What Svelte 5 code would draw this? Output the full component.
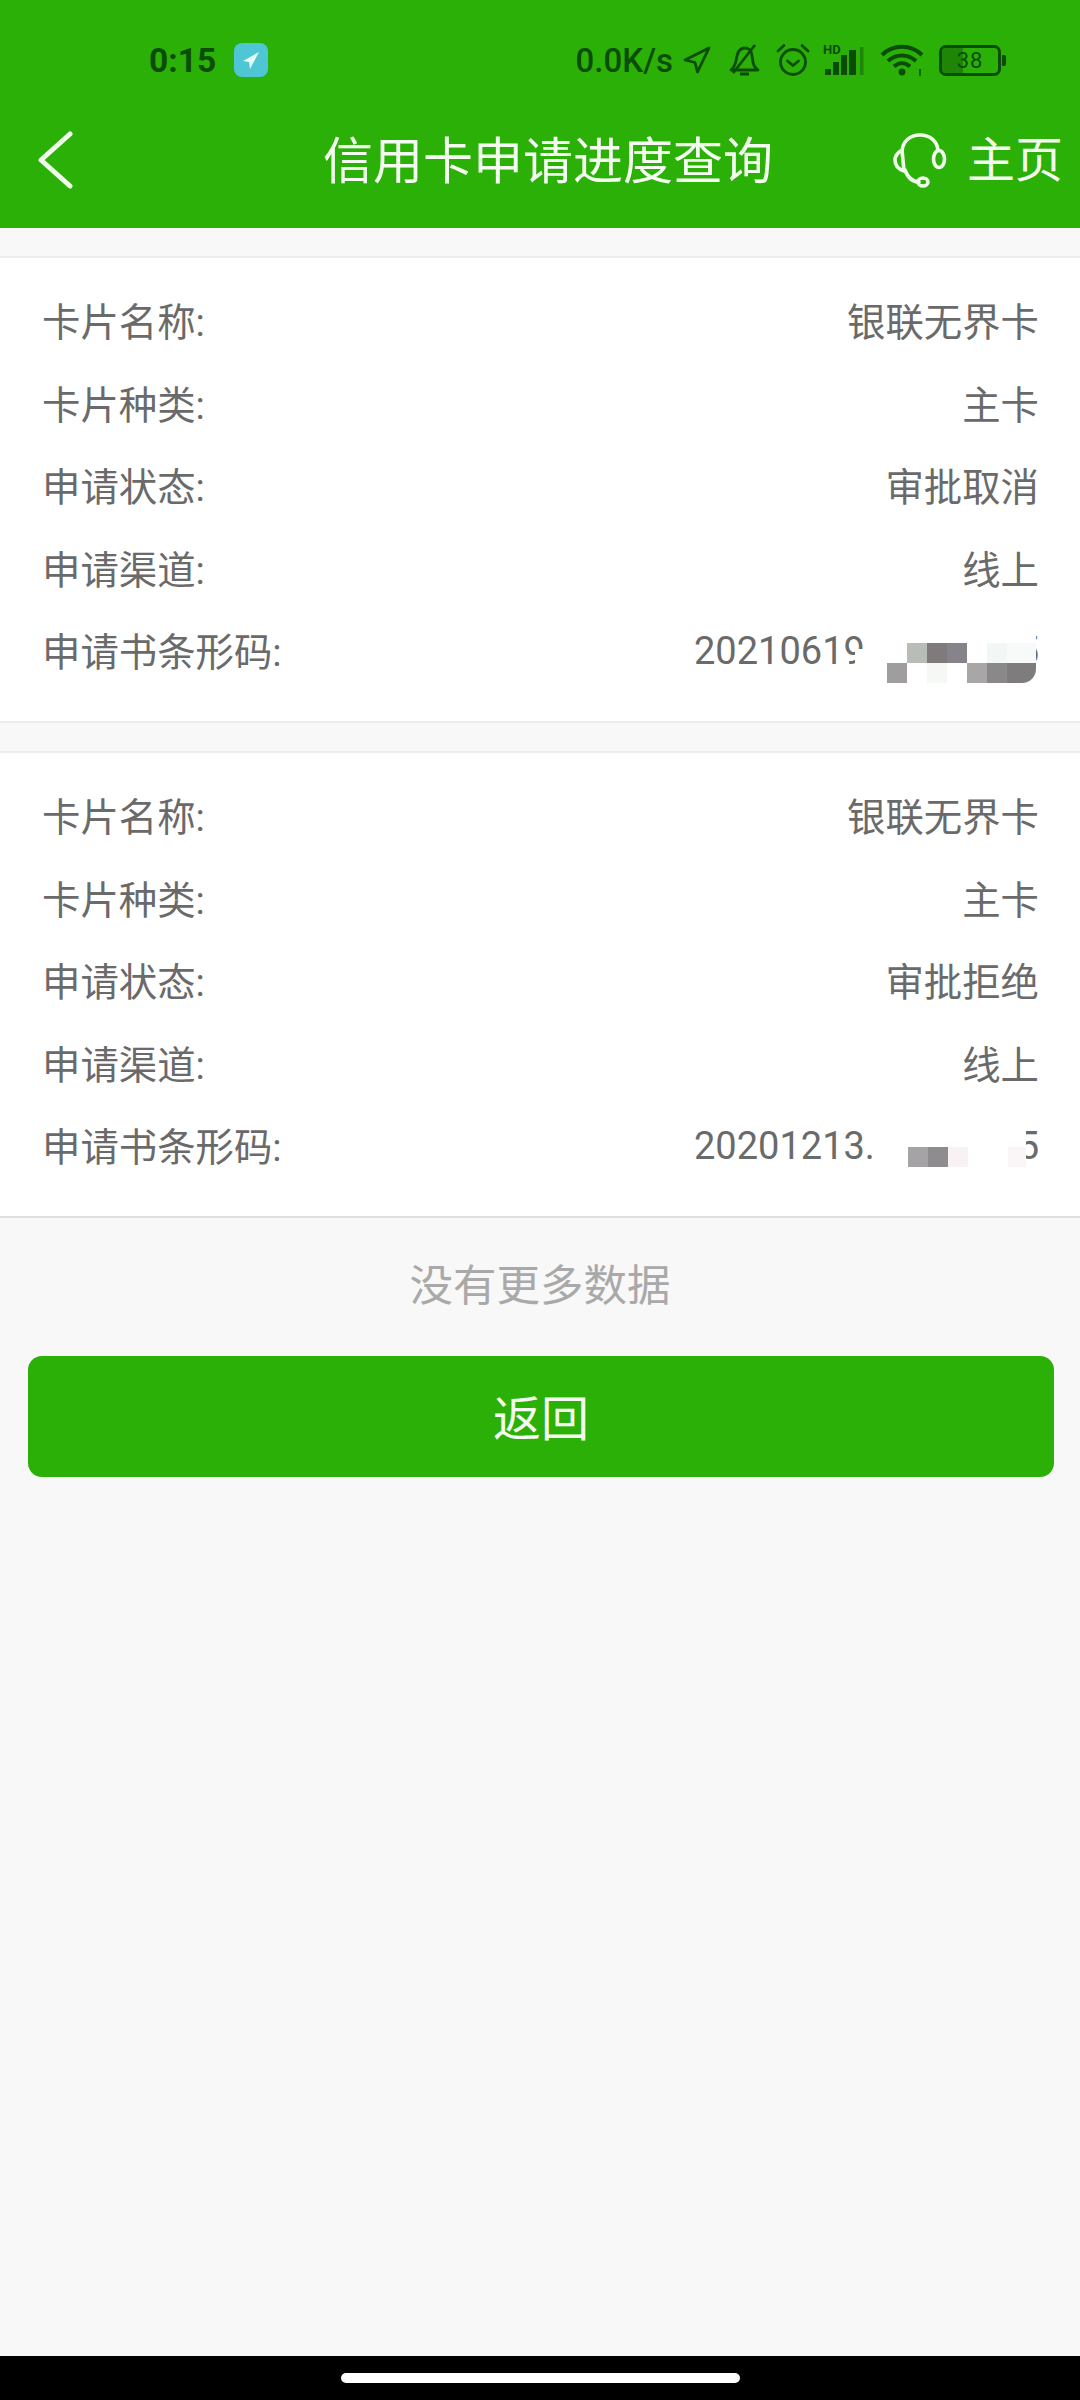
<script>
const cards = [
  {
    status: '审批取消',
    code: '20210619',
    blocks: ['', '', '#b9bdb8', '#7f7b7d', '#87838a', '', '#f2f6f4', '#f8fafa', '', '#a09d9f', '', '#f5f8f5', '', '#a8a6a7', '#8a8889', '#7f7c7e'],
    cls: 'first'
  },
  {
    status: '审批拒绝',
    code: '20201213.',
    blocks: ['', '', '#a5a3a5', '#8f8c90', '#f8f2f4', '', '', '#faf6f8'],
    cls: 'second'
  }
]
</script>

<div class="page">
  <header>
    <div class="status">
      <div class="left">
        <span class="time">0:15</span>
        <span class="app-badge">
          <svg viewBox="0 0 32 32" width="32" height="32"><path d="M24 8 L8 17 L14 18 L15 25 Z" fill="#e8fbfb"/></svg>
        </span>
      </div>
      <div class="right">
        <span class="speed">0.0K/s</span>
        <svg class="ic" viewBox="0 0 30 30" width="30" height="30"><path d="M27 3 L3 15 L13 17.500 L15.500 27 Z" fill="none" stroke="#0b4d06" stroke-width="2.800" stroke-linejoin="round"/></svg>
        <svg class="ic bell" viewBox="0 0 32 34" width="32" height="34"><path d="M3 27 C8 23 8 17 9 13 C10 8 13 5 17 5 C21 5 24 8 24 13 L25 19 C25.500 22 27 25 30 27 Z M12 31 H21 M27 2 L5 30" fill="none" stroke="#0b4d06" stroke-width="2.800" stroke-linejoin="round"/></svg>
        <svg class="ic alarm" viewBox="0 0 36 36" width="36" height="36"><circle cx="18" cy="20" r="12.500" fill="none" stroke="#0b4d06" stroke-width="2.800"/><path d="M12.500 19 L18 23.500 L23.500 19 M3 9 L9 3.500 M33 9 L27 3.500" fill="none" stroke="#0b4d06" stroke-width="2.800" stroke-linecap="round"/></svg>
        <span class="signal">
          <span class="hd">HD</span>
          <svg viewBox="0 0 41 30" width="41" height="30"><path d="M2 30 V24 H8 V30 Z M10 30 V17 H16 V30 Z M18 30 V10 H24 V30 Z M26 30 V5 H33 V30 Z" fill="#0b4d06"/><rect x="37" y="2" width="3.500" height="28" fill="#1f8507"/></svg>
        </span>
        <svg class="ic wifi" viewBox="0 0 44 32" width="44" height="32"><path d="M2 11 C13 0 31 0 42 11 M8 17 C16 9.500 28 9.500 36 17 M14 22.500 C19 18 25 18 30 22.500" fill="none" stroke="#0b4d06" stroke-width="4"/><circle cx="22" cy="28" r="3.400" fill="#0b4d06"/><path d="M40 25 V33" stroke="#0b4d06" stroke-width="1.500"/></svg>
        <span class="battery"><span class="level"></span><span class="pct">38</span></span>
        <span class="nub"></span>
      </div>
    </div>
    <nav>
      <svg class="back" viewBox="0 0 36 60" width="36" height="60"><path d="M33 4 L4 30 L33 56" fill="none" stroke="#f0fbec" stroke-width="5" stroke-linecap="round" stroke-linejoin="round"/></svg>
      <h1>信用卡申请进度查询</h1>
      <div class="home">
        <svg viewBox="0 0 56 56" width="56" height="56"><path d="M10 19 C11 9 18 3 28 3 C38 3 45 9 46 18 M13 38 C16 46 21 50 27 50" fill="none" stroke="#f0fbec" stroke-width="3.600" stroke-linecap="round"/><path d="M10 18 C5 21 3 24 3 28 C3 33 6 37 12 39 Z" fill="none" stroke="#f0fbec" stroke-width="3.600" stroke-linejoin="round"/><ellipse cx="47" cy="27" rx="5.500" ry="8.500" fill="none" stroke="#f0fbec" stroke-width="3.600"/><ellipse cx="31" cy="50" rx="5" ry="4" fill="none" stroke="#f0fbec" stroke-width="3.600"/></svg>
        <span>主页</span>
      </div>
    </nav>
  </header>

  <main>
    {#each cards as card}
      <section class="card">
        <div class="row"><span>卡片名称:</span><span>银联无界卡</span></div>
        <div class="row"><span>卡片种类:</span><span>主卡</span></div>
        <div class="row"><span>申请状态:</span><span>{card.status}</span></div>
        <div class="row"><span>申请渠道:</span><span>线上</span></div>
        <div class="row">
          <span>申请书条形码:</span>
          <span class="code">
            <span>{card.code}</span>
            <span>5</span>
            <span class="mask {card.cls}">
              {#each card.blocks as color}
                <i style:background={color || 'transparent'}></i>
              {/each}
            </span>
          </span>
        </div>
      </section>
    {/each}

    <p class="no-more">没有更多数据</p>
    <button>返回</button>
  </main>

  <footer><span class="pill"></span></footer>
</div>

<style>
  :global(body) {
    margin: 0;
  }
  .page {
    width: 1080px;
    height: 2400px;
    display: flex;
    flex-direction: column;
    background: #f8f8f8;
    font-family: Roboto, "Noto Sans CJK SC", sans-serif;
    color: #6a6a6a;
  }
  header {
    height: 228px;
    flex: none;
    background: #2bb007;
  }
  .status {
    height: 120px;
    display: flex;
    justify-content: space-between;
    align-items: center;
    color: #0b4d06;
    font-weight: 700;
    font-size: 33.500px;
  }
  .left {
    display: flex;
    align-items: center;
    gap: 18px;
    padding-left: 149px;
  }
  .app-badge {
    width: 34px;
    height: 34px;
    border-radius: 8px;
    background: #4ec6d4;
    display: flex;
    align-items: center;
    justify-content: center;
  }
  .right {
    display: flex;
    align-items: center;
    padding-right: 74px;
  }
  .speed {
    font-weight: 500;
    font-size: 33px;
    margin-right: 9px;
  }
  .ic {
    flex: none;
  }
  .bell {
    margin-left: 16px;
  }
  .alarm {
    margin-left: 15px;
  }
  .signal {
    position: relative;
    margin-left: 12px;
    width: 41px;
    height: 30px;
  }
  .signal svg {
    display: block;
  }
  .hd {
    position: absolute;
    left: 0;
    top: -2px;
    font-size: 13px;
    line-height: 14px;
    font-weight: 700;
  }
  .wifi {
    margin-left: 16px;
  }
  .battery {
    position: relative;
    box-sizing: border-box;
    width: 62px;
    height: 31px;
    margin-left: 15px;
    border: 3px solid #0b4d06;
    border-radius: 7px;
    display: flex;
    align-items: center;
    justify-content: center;
    overflow: hidden;
  }
  .level {
    position: absolute;
    left: 0;
    top: 0;
    bottom: 0;
    width: 38%;
    background: #1f8507;
  }
  .pct {
    position: relative;
    font-size: 22px;
    font-weight: 400;
    letter-spacing: 1px;
  }
  .nub {
    width: 4px;
    height: 11px;
    margin-left: 1px;
    border-radius: 0 2px 2px 0;
    background: #0b4d06;
  }
  nav {
    height: 80px;
    padding: 0 17px 0 37px;
    display: flex;
    align-items: center;
    color: #f4fcf1;
  }
  .back {
    flex: none;
  }
  h1 {
    margin: 3px 0 0 250px;
    font-size: 50px;
    font-weight: 400;
    line-height: 60px;
    white-space: nowrap;
  }
  .home {
    margin-left: auto;
    display: flex;
    align-items: center;
    gap: 19px;
    font-size: 48px;
    line-height: 60px;
    white-space: nowrap;
  }
  .home span {
    margin-top: 2px;
  }
  .home svg {
    flex: none;
  }
  main {
    flex: 1;
    padding-top: 28px;
    display: flex;
    flex-direction: column;
  }
  .card {
    box-sizing: border-box;
    height: 467px;
    padding: 20px 41px 0 42px;
    background: #fff;
    border-top: 2px solid #ececec;
    border-bottom: 2px solid #ececec;
  }
  .card + .card {
    margin-top: 28px;
    border-bottom-color: #dedede;
  }
  .row {
    height: 82.500px;
    display: flex;
    justify-content: space-between;
    align-items: center;
    font-size: 38.400px;
  }
  .code {
    position: relative;
    width: 345px;
    margin-top: 4px;
    display: flex;
    justify-content: space-between;
    font-size: 38px;
    line-height: 44px;
  }
  /* pixelated privacy blur over the barcode digits */
  .mask {
    position: absolute;
    display: grid;
    grid-auto-rows: 20px;
    background: #fff;
  }
  .mask.first {
    left: 173px;
    top: 2px;
    height: 52px;
    box-sizing: border-box;
    padding-top: 12px;
    grid-template-columns: repeat(7, 20px) 29px;
  }
  .mask.first::before {
    content: '';
    position: absolute;
    left: -12px;
    top: 18px;
    width: 12px;
    height: 14px;
    background: #fff;
  }
  .mask.first i:last-child {
    border-radius: 0 0 14px 0;
  }
  .mask.second {
    left: 180px;
    top: 3px;
    height: 40px;
    box-sizing: border-box;
    padding-top: 20px;
    grid-template-columns: 14px repeat(6, 20px) 18px;
  }
  .mask i {
    display: block;
  }
  .no-more {
    margin: 0;
    padding-top: 39px;
    height: 138px;
    box-sizing: border-box;
    flex: none;
    font-size: 43.500px;
    line-height: 60px;
    text-align: center;
    color: #a9a9a9;
  }
  button {
    margin: 0 26px 0 28px;
    padding: 0 0 4px;
    height: 121px;
    flex: none;
    border: none;
    border-radius: 14px;
    background: #2bb007;
    color: #f4fcf1;
    font-family: inherit;
    font-size: 48px;
  }
  footer {
    height: 44px;
    flex: none;
    background: #000;
    display: flex;
    justify-content: center;
    padding-top: 17px;
    box-sizing: border-box;
  }
  .pill {
    width: 399px;
    height: 10px;
    border-radius: 5px;
    background: #fff;
  }
</style>
